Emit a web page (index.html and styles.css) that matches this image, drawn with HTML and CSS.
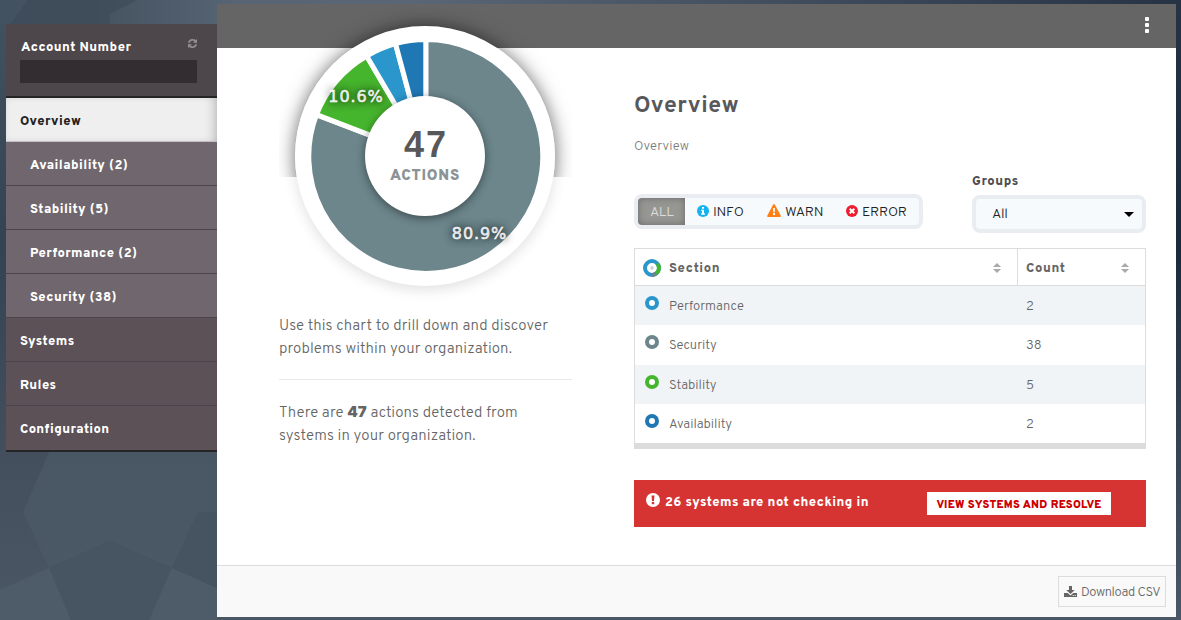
FILE: index.html
```html
<!DOCTYPE html>
<html lang="en">
<head>
<meta charset="utf-8">
<title>Overview</title>
<link rel="stylesheet" href="styles.css">
</head>
<body>
<svg class="backdrop" viewBox="0 0 1181 620" preserveAspectRatio="none" aria-hidden="true">
  <defs>
    <linearGradient id="sky" x1="0" y1="0" x2="0" y2="1"><stop offset="0" stop-color="#435261"/><stop offset=".4" stop-color="#344352"/><stop offset=".74" stop-color="#444f5d"/><stop offset="1" stop-color="#4a5765"/></linearGradient>
    <linearGradient id="top" x1="0" y1="0" x2="1" y2="0"><stop offset="0" stop-color="#435261"/><stop offset=".08" stop-color="#455361"/><stop offset=".2" stop-color="#566473"/><stop offset=".35" stop-color="#596675"/><stop offset="1" stop-color="#253345"/></linearGradient>
    <linearGradient id="edge" x1="0" y1="0" x2="0" y2="1"><stop offset="0" stop-color="#253345"/><stop offset=".4" stop-color="#1b2a3a"/><stop offset=".8" stop-color="#3c4958"/><stop offset="1" stop-color="#4b5766"/></linearGradient>
  </defs>
  <rect width="1181" height="620" fill="url(#sky)"/>
  <rect width="1181" height="24" fill="url(#top)"/>
  <rect x="1176" width="5" height="620" fill="url(#edge)"/>
  <path d="M28 0L10 24H110V14L137 0Z" fill="#394755" opacity=".5"/>
  <path d="M217 450H50L23 512L49 568L110 541L172 568L198 512H217Z" fill="#4d5b69" opacity=".65"/>
  <path d="M110 541L172 568L149 620H71L49 568Z" fill="#475462"/>
  <path d="M198 512H217V588L172 568Z" fill="#465361"/>
  <path d="M49 568L0 590V620H71Z M172 568L217 588V620H149Z" fill="#4e5b69"/>
</svg>
<div class="app">
  <nav class="sidebar">
    <div class="account">
      <div class="account-head"><span>Account Number</span>
        <svg class="refresh" viewBox="0 0 1536 1536"><path d="M1511 928q0 5-1 7-64 268-268 434.500T764 1536q-146 0-282.500-55T238 1324l-129 129q-19 19-45 19t-45-19-19-45V960q0-26 19-45t45-19h448q26 0 45 19t19 45-19 45l-137 137q71 66 161 102t187 36q134 0 250-65t186-179q11-17 53-117 8-23 30-23h192q13 0 22.500 9.500t9.500 22.500zm25-800v448q0 26-19 45t-45 19h-448q-26 0-45-19t-19-45 19-45l138-138Q969 256 768 256q-134 0-250 65T332 500q-11 17-53 117-8 23-30 23H50q-13 0-22.500-9.500T18 608v-7q65-268 270-434.500T768 0q146 0 284 55.500T1297 212l130-129q19-19 45-19t45 19 19 45z"/></svg>
      </div>
      <div class="account-field"></div>
    </div>
    <a class="item active"><span>Overview</span></a>
    <a class="item sub"><span>Availability (2)</span></a>
    <a class="item sub"><span>Stability (5)</span></a>
    <a class="item sub"><span>Performance (2)</span></a>
    <a class="item sub"><span>Security (38)</span></a>
    <a class="item"><span>Systems</span></a>
    <a class="item"><span>Rules</span></a>
    <a class="item last"><span>Configuration</span></a>
  </nav>
  <main class="panel">
    <header class="topbar"><span class="dots"><i></i><i></i><i></i></span></header>
    <div class="content">
      <section class="summary">
        <div class="chart">
          <div class="halo"><div class="halo-disc"></div></div>
          <div class="disc"></div>
          <svg class="pie" viewBox="0 0 260 260">
            <g stroke="#fff" stroke-width="5">
              <path fill="#6c868c" d="M130.800 130.500V13.500A117 117 0 1 1 21.500 88.700Z"/>
              <path fill="#46b52e" d="M130.800 130.500L21.500 88.700A117 117 0 0 1 71.700 30.100Z"/>
              <path fill="#2b96cc" d="M130.800 130.500L71.700 30.100A117 117 0 0 1 100.500 17.700Z"/>
              <path fill="#1f77b4" d="M130.800 130.500L100.500 17.700A117 117 0 0 1 130.800 13.500Z"/>
            </g>
            <text class="pct" x="61" y="76" text-anchor="middle">10.6%</text>
            <text class="pct" x="184.500" y="213" text-anchor="middle">80.9%</text>
          </svg>
          <div class="hub"><b>47</b><span>ACTIONS</span></div>
        </div>
        <p class="lead first">Use this chart to drill down and discover<br>problems within your organization.</p>
        <p class="lead second">There are <b>47</b> actions detected from<br>systems in your organization.</p>
      </section>
      <section class="details">
        <h1>Overview</h1>
        <p class="crumb">Overview</p>
        <div class="filters">
          <div class="levels">
            <span class="level on">ALL</span>
            <span class="level info"><svg viewBox="0 0 12 12"><circle cx="6" cy="6" r="6" fill="#12b3f0"/><path fill="#fff" d="M5 2h2v1.700H5zM4.200 4.700H7v3.600h.9v1.400H4.200V8.300H5V6h-.8z"/></svg>INFO</span>
            <span class="level warn"><svg viewBox="0 0 14 13"><path fill="#ff7f14" d="M6.200.5Q7-.5 7.800.5L13.800 11.700Q14.200 13 13 13H1Q-.2 13 .2 11.700Z"/><path fill="#fff" d="M6 4h2l-.3 4.200H6.300zM6 9h2v2H6z"/></svg>WARN</span>
            <span class="level error"><svg viewBox="0 0 12 12"><circle cx="6" cy="6" r="6" fill="#ed1c2e"/><path stroke="#fff" stroke-width="2" d="M3.700 3.700l4.600 4.600M8.300 3.700L3.700 8.300"/></svg>ERROR</span>
          </div>
          <div class="groups"><label>Groups</label><div class="select"><span>All</span><svg viewBox="0 0 10 5"><path d="M0 0H10L5 5Z"/></svg></div></div>
        </div>
        <div class="table">
          <div class="row head">
            <div class="cell"><svg class="ring" viewBox="0 0 18 18"><g fill="none" stroke-width="4"><circle cx="9" cy="9" r="7" stroke="#2b96cc"/><path d="M14.500 4.700A7 7 0 0 1 13 14.700" stroke="#46b52e"/><path d="M13 14.700A7 7 0 0 1 9 16" stroke="#6c868c"/></g><path d="M7.500 8h3M7.500 9.800h3" stroke="#aab4be" stroke-width="1"/></svg><span>Section</span><svg class="sort" viewBox="0 0 8 10"><path d="M4 0L8 4H0ZM0 6H8L4 10Z"/></svg></div>
            <div class="cell"><span>Count</span><svg class="sort" viewBox="0 0 8 10"><path d="M4 0L8 4H0ZM0 6H8L4 10Z"/></svg></div>
          </div>
          <div class="row odd"><div class="cell"><i class="dot light"></i><span>Performance</span></div><div class="cell">2</div></div>
          <div class="row"><div class="cell"><i class="dot grey"></i><span>Security</span></div><div class="cell">38</div></div>
          <div class="row odd"><div class="cell"><i class="dot green"></i><span>Stability</span></div><div class="cell">5</div></div>
          <div class="row"><div class="cell"><i class="dot blue"></i><span>Availability</span></div><div class="cell">2</div></div>
        </div>
        <div class="alert">
          <svg viewBox="0 0 14 14"><circle cx="7" cy="7" r="7" fill="#fff"/><path fill="#d63432" d="M5.500 2.500h3L8 8H6zM5.800 9h2.400v2.300H5.800z"/></svg>
          <span>26 systems are not checking in</span>
          <a class="resolve"><span>VIEW SYSTEMS AND RESOLVE</span></a>
        </div>
      </section>
    </div>
    <footer class="bottom"><a class="csv"><svg viewBox="0 0 13 11"><path d="M5 0h3v4h2.700L6.500 8 2.300 4H5zM0 7h3.700l2.800 2.500L9.300 7H13v4H0z"/><path fill="#f9f9f9" d="M8.700 9h1v1h-1zM10.700 9h1v1h-1z"/></svg><span>Download CSV</span></a></footer>
  </main>
</div>
</body>
</html>
```
FILE: styles.css
```css
* { box-sizing: border-box; }
body { margin: 0; width: 1181px; height: 620px; overflow: hidden; background: #46535f; color: #656565; font: 300 13px/20px Overpass, Roboto, sans-serif; }
.backdrop { position: absolute; left: 0; top: 0; width: 1181px; height: 620px; z-index: -1; }
.app { display: flex; height: 620px; padding: 4px 5px 3px 6px; }
.sidebar { width: 211px; padding-top: 20px; flex: none; font-weight: 800; font-size: 13px; letter-spacing: .45px; color: #fff; }
.account { height: 74px; padding: 12px 20px 0 14px; background: #4d464a; border-bottom: 2px solid #252427; }
.account-head { display: flex; justify-content: space-between; height: 24px; line-height: 25px; padding-left: 1px; }
.refresh { width: 9px; height: 9px; margin: 3px 0 0 0; fill: #949092; stroke: #949092; stroke-width: 60; }
.account-field { height: 23px; background: #332d31; }
.item { display: block; height: 44px; line-height: 49px; padding-left: 14px; background: #5b5157; border-bottom: 1px solid #4b444a; }
.item.active { color: #222; background: #efefef; border-color: #c1bfc1; box-shadow: inset -11px 0 11px -8px rgba(0,0,0,.18), inset 0 0 6px rgba(0,0,0,.08); }
.item.sub { background: #70666d; padding-left: 24px; }
.item.last { height: 46px; border-bottom: 2px solid #252427; }
.panel { flex: 1; display: flex; flex-direction: column; background: #fff; }
.topbar { height: 44px; flex: none; display: flex; justify-content: flex-end; padding: 13px 27px 0 0; background: #656565; }
.dots { display: flex; flex-direction: column; gap: 2px; }
.dots i { width: 4px; height: 4px; border-radius: 1px; background: #fff; }
.content { display: flex; flex: 1; padding: 0 30px 0 62px; }
.summary { width: 293px; margin-right: 62px; }
.chart { position: relative; width: 293px; height: 238px; margin-bottom: 30px; }
.halo { position: absolute; left: 0; top: -42px; width: 293px; height: 171px; overflow: hidden; }
.halo-disc { position: absolute; left: 16px; top: 20px; width: 260px; height: 260px; border-radius: 50%; box-shadow: 0 0 19px rgba(0,0,0,.5); }
.disc { position: absolute; left: 16px; top: -22px; width: 260px; height: 260px; border-radius: 50%; background: #fff; box-shadow: 0 4px 14px rgba(0,0,0,.12); }
.pie { position: absolute; left: 16px; top: -22px; width: 260px; height: 260px; }
.pct { font: 400 16px "DejaVu Sans", sans-serif; letter-spacing: .9px; fill: #fff; stroke: #fff; stroke-width: .5px; text-shadow: 0 0 8px rgba(0,0,0,.8); }
.hub { position: absolute; left: 86px; top: 48px; width: 120px; height: 120px; border-radius: 50%; background: #fff; box-shadow: 0 2px 10px rgba(0,0,0,.45); text-align: center; color: #8c9396; display: flex; flex-direction: column; padding-top: 29px; }
.hub b { font: 700 36px/40px "Liberation Sans", sans-serif; letter-spacing: 2px; padding-left: 2px; color: #58585a; }
.hub span { font-weight: 900; font-size: 15px; line-height: 24px; letter-spacing: .8px; }
.lead { margin: 0; font-size: 15px; line-height: 22.500px; white-space: nowrap; letter-spacing: .11px; }
.lead b { font-family: Inter, sans-serif; font-size: 15px; line-height: 1; font-weight: 900; }
.first { height: 64px; border-bottom: 1px solid #e9e9e9; }
.second { margin-top: 23px; }
.details { width: 512px; flex: none; }
h1 { margin: 43px 0 0; font-size: 23px; line-height: 32px; font-weight: 700; letter-spacing: .6px; color: #58585a; }
.crumb { margin: 14px 0 0; line-height: 20px; letter-spacing: .15px; color: #7c7c7c; }
.filters { display: flex; justify-content: space-between; height: 91px; padding-top: 14px; }
.levels { display: flex; height: 35px; width: 289px; margin-top: 23px; border: 4px solid #e9edf1; border-radius: 8px; background: #f6fafd; color: #222; font-size: 14px; line-height: 30px; letter-spacing: -.2px; }
.level { display: flex; white-space: nowrap; }
.level svg { width: 12px; height: 12px; margin: 7px 4px 0 0; }
.on { width: 47px; height: 27px; padding-left: 12px; color: #ddd; background: #969793; border-radius: 4px 0 0 4px; box-shadow: inset 0 0 7px rgba(0,0,0,.3); }
.info { width: 69px; padding-left: 12px; }
.warn { width: 80px; padding-left: 13px; }
.level.warn svg { width: 14px; height: 13px; margin-top: 6px; }
.error { padding-left: 12px; }
.groups { width: 174px; }
.groups label { display: block; height: 24px; line-height: 23px; font-weight: 800; letter-spacing: .6px; color: #4d4d52; }
.select { display: flex; justify-content: space-between; height: 38px; border: 4px solid #e9edf1; border-radius: 8px; background: #f6fafd; padding: 0 8px 0 16px; line-height: 32px; font-size: 14px; letter-spacing: -.3px; color: #222; }
.select svg { width: 10px; height: 5px; margin-top: 13px; }
.table { border: 1px solid #dcdcdc; border-bottom: 6px solid #dcdcdc; height: 201px; }
.row { display: grid; grid-template-columns: 382px 1fr; height: 39.330px; line-height: 42px; }
.head { height: 37px; border-bottom: 1px solid #dcdcdc; font-weight: 800; line-height: 41px; letter-spacing: .7px; }
.cell { display: flex; height: 36px; padding-left: 9px; }
.cell:first-child { padding-left: 8px; }
.head .cell { padding-right: 16px; }
.head .cell + .cell { border-left: 1px solid #dcdcdc; padding-left: 8px; }
.ring { width: 18px; height: 18px; margin: 10px 8px 0 0; }
.sort { width: 8px; height: 10px; margin: 14px 0 0 auto; fill: #aaa; }
.odd { background: #f0f4f7; }
.dot { width: 14px; height: 14px; border: 4px solid; border-radius: 50%; margin: 10px 10px 0 2px; background: #fff; }
.light { color: #2b96cc; } .grey { color: #6c868c; } .green { color: #46b52e; } .blue { color: #1f77b4; }
.alert { display: flex; height: 47px; margin-top: 31px; padding: 12px 35px 0 12px; background: #d63432; color: #fff; font-weight: 800; line-height: 22px; letter-spacing: .43px; white-space: nowrap; }
.alert svg { width: 14px; height: 14px; margin: 1px 5px 0 0; }
.resolve { width: 184px; height: 23px; margin-left: auto; background: #fff; color: #c00; font-size: 11px; line-height: 26px; font-weight: 900; text-align: center; letter-spacing: .25px; }
.bottom { height: 52px; flex: none; padding: 10px 10px 0 0; background: #f9f9f9; border-top: 1px solid #dcdcdc; display: flex; justify-content: flex-end; }
.csv { display: flex; width: 108px; height: 31px; padding-left: 5px; border: 1px solid #dcdcdc; line-height: 32px; letter-spacing: -.4px; white-space: nowrap; }
.csv svg { width: 13px; height: 11px; margin: 9px 4px 0 0; fill: #656565; }
```
